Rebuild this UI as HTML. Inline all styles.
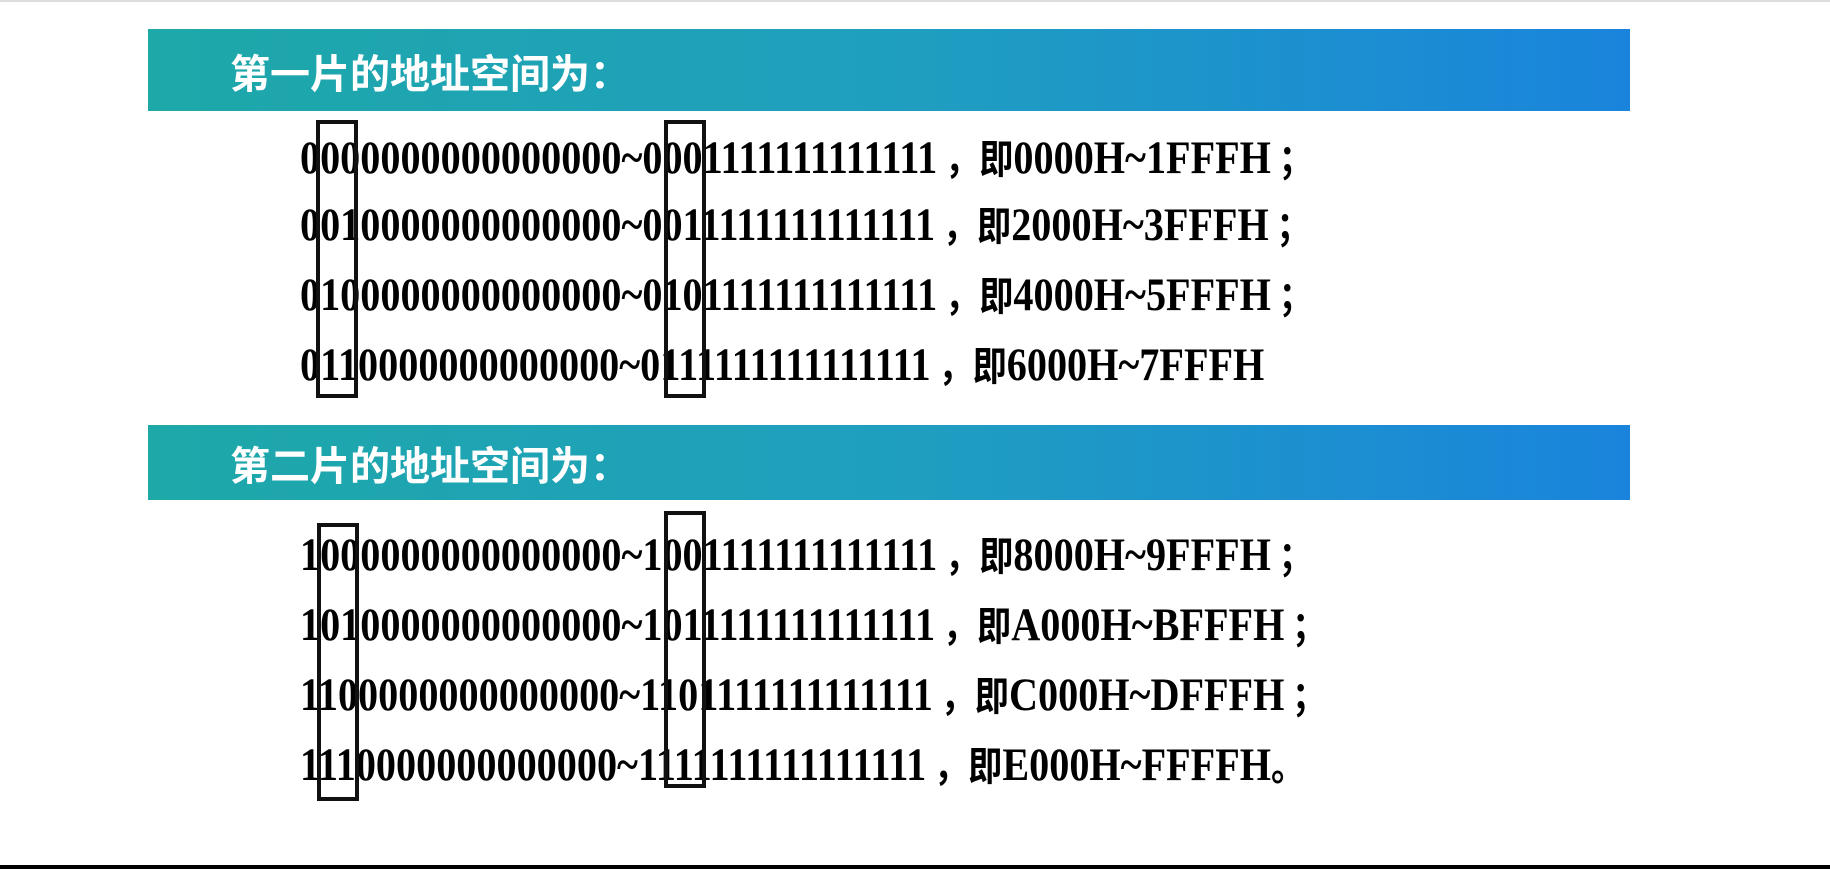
<!DOCTYPE html>
<html><head><meta charset="utf-8"><style>
html,body{margin:0;padding:0;}
body{width:1830px;height:869px;background:#fff;position:relative;overflow:hidden;font-family:"Liberation Serif","Noto Serif CJK SC",serif;}
.band{position:absolute;left:148px;width:1482px;background:linear-gradient(90deg,#1ea8a8 0%,#1f9fbf 50%,#1a84dc 100%);}
.band span{position:absolute;left:82px;color:#fff;font-family:"Liberation Sans","Noto Sans CJK SC",sans-serif;font-weight:bold;font-size:40px;line-height:44px;}
.l{position:absolute;left:300px;font-weight:bold;font-size:47px;white-space:pre;color:#000;line-height:48px;transform:scaleX(0.855);transform-origin:left top;}
.l .c{font-family:"Noto Sans CJK SC",sans-serif;font-weight:bold;font-size:40px;}
.box{position:absolute;border:4px solid #111;box-sizing:border-box;}
</style></head><body>
<div style="position:absolute;left:0;top:0;width:1830px;height:2px;background:#ddd"></div>
<div class="band" style="top:29px;height:82px"><span style="top:24px">第一片的地址空间为：</span></div>
<div class="band" style="top:425px;height:75px"><span style="top:20px">第二片的地址空间为：</span></div>
<div class="l" style="top:132px">0000000000000000~0001111111111111<span class="c"> ，即</span>0000H~1FFFH<span class="c"> ；</span></div>
<div class="l" style="top:199px">0010000000000000~0011111111111111<span class="c"> ，即</span>2000H~3FFFH<span class="c"> ；</span></div>
<div class="l" style="top:269px">0100000000000000~0101111111111111<span class="c"> ，即</span>4000H~5FFFH<span class="c"> ；</span></div>
<div class="l" style="top:339px">0110000000000000~0111111111111111<span class="c"> ，即</span>6000H~7FFFH</div>
<div class="l" style="top:529px">1000000000000000~1001111111111111<span class="c"> ，即</span>8000H~9FFFH<span class="c"> ；</span></div>
<div class="l" style="top:599px">1010000000000000~1011111111111111<span class="c"> ，即</span>A000H~BFFFH<span class="c"> ；</span></div>
<div class="l" style="top:669px">1100000000000000~1101111111111111<span class="c"> ，即</span>C000H~DFFFH<span class="c"> ；</span></div>
<div class="l" style="top:739px">1110000000000000~1111111111111111<span class="c"> ，即</span>E000H~FFFFH<span class="c">。</span></div>
<div class="box" style="left:316px;top:120px;width:42px;height:278px"></div>
<div class="box" style="left:664px;top:120px;width:42px;height:278px"></div>
<div class="box" style="left:317px;top:523px;width:42px;height:278px"></div>
<div class="box" style="left:664px;top:511px;width:42px;height:277px"></div>
<div style="position:absolute;left:0;top:865px;width:1830px;height:4px;background:#000"></div>
</body></html>
